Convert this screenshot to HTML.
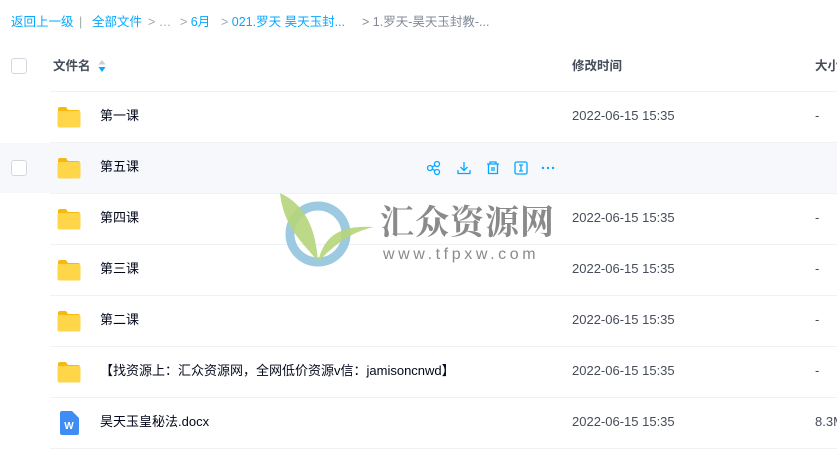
<!DOCTYPE html><html><head><meta charset="utf-8"><style>
body{margin:0;width:837px;height:468px;background:#fff;font-family:"Liberation Sans","Noto Sans CJK SC",sans-serif;position:relative;overflow:hidden}
.a{position:absolute;white-space:nowrap;line-height:16px}
.bc{top:14px;font-size:12.5px;color:#06a7ff}
.g{color:#a0a6b0}
.line{position:absolute;left:50px;right:0;height:1px;background:#f0f1f4}
.cb{position:absolute;left:11px;width:14px;height:14px;border:1px solid #d4d7de;border-radius:3px;background:#fff}
.fold{position:absolute;left:57px;width:24px;height:22px}
.nm,.dt,.sz{position:absolute;font-size:13px;line-height:16px;white-space:nowrap}
.nm{left:100px;color:#03081a}
.dt{left:572px;color:#454d5a}
.sz{left:815px;color:#454d5a}
</style></head><body>
<div class="a bc" style="left:11px">返回上一级</div>
<div class="a bc g" style="left:79px">|</div>
<div class="a bc" style="left:92px">全部文件</div>
<div class="a bc g" style="left:148px">&gt; …</div>
<div class="a bc" style="left:180px"><span class="g">&gt;</span> 6月</div>
<div class="a bc" style="left:221px"><span class="g">&gt;</span> 021.罗天 昊天玉封...</div>
<div class="a bc" style="left:362px;color:#818999">&gt; 1.罗天-昊天玉封教-...</div>

<div class="cb" style="top:58px"></div>
<div class="a" style="left:53px;top:58px;font-size:12.5px;color:#454d5a;font-weight:bold">文件名</div>
<svg class="a" style="left:98px;top:60px" width="8" height="12"><path d="M4 0L7.5 4.5H0.5Z" fill="#c8ccd4"/><path d="M4 12L7.5 7H0.5Z" fill="#06a7ff"/></svg>
<div class="a" style="left:572px;top:58px;font-size:12.5px;color:#454d5a;font-weight:bold">修改时间</div>
<div class="a" style="left:815px;top:58px;font-size:12.5px;color:#454d5a;font-weight:bold">大小</div>

<div class="a" style="left:0;top:143px;width:837px;height:50px;background:#f6f8fc"></div>
<div class="cb" style="top:160px"></div>

<div class="line" style="top:91px"></div><div class="line" style="top:142px"></div><div class="line" style="top:193px"></div><div class="line" style="top:244px"></div><div class="line" style="top:295px"></div><div class="line" style="top:346px"></div><div class="line" style="top:397px"></div><div class="line" style="top:448px"></div>

<svg width="0" height="0" style="position:absolute"><defs><symbol id="f" viewBox="0 0 24 22"><path d="M1 3a2 2 0 0 1 2-2h6l2 3h10a2 2 0 0 1 2 2v1H1z" fill="#f5b90f"/><rect x="0.5" y="5" width="23" height="16.5" rx="2" fill="#ffd54a"/></symbol></defs></svg>

<svg class="fold" style="top:106px"><use href="#f"/></svg><div class="nm" style="top:108px">第一课</div><div class="dt" style="top:108px">2022-06-15 15:35</div><div class="sz" style="top:108px">-</div>
<svg class="fold" style="top:157px"><use href="#f"/></svg><div class="nm" style="top:159px">第五课</div>
<svg class="fold" style="top:208px"><use href="#f"/></svg><div class="nm" style="top:210px">第四课</div><div class="dt" style="top:210px">2022-06-15 15:35</div><div class="sz" style="top:210px">-</div>
<svg class="fold" style="top:259px"><use href="#f"/></svg><div class="nm" style="top:261px">第三课</div><div class="dt" style="top:261px">2022-06-15 15:35</div><div class="sz" style="top:261px">-</div>
<svg class="fold" style="top:310px"><use href="#f"/></svg><div class="nm" style="top:312px">第二课</div><div class="dt" style="top:312px">2022-06-15 15:35</div><div class="sz" style="top:312px">-</div>
<svg class="fold" style="top:361px"><use href="#f"/></svg><div class="nm" style="top:363px">【找资源上：汇众资源网，全网低价资源v信：jamisoncnwd】</div><div class="dt" style="top:363px">2022-06-15 15:35</div><div class="sz" style="top:363px">-</div>
<svg class="a" style="left:59px;top:411px" width="20" height="24"><path d="M3 0h10l7 7v15a2 2 0 0 1-2 2H3a2 2 0 0 1-2-2V2a2 2 0 0 1 2-2z" fill="#3f8cf4"/><text x="10" y="18" font-size="10" font-weight="bold" fill="#fff" text-anchor="middle" font-family="Liberation Sans">W</text></svg>
<div class="nm" style="top:414px">昊天玉皇秘法.docx</div><div class="dt" style="top:414px">2022-06-15 15:35</div><div class="sz" style="top:414px">8.3M</div>

<svg class="a" style="left:426px;top:159px" width="136" height="18" fill="none" stroke="#06a7ff" stroke-width="1.3">
<circle cx="4" cy="9" r="2.5"/><circle cx="11" cy="5" r="2.5"/><circle cx="11" cy="13" r="2.5"/><path d="M6.3 8l2.5-1.6M6.3 10l2.5 1.6"/>
<path d="M38 3v8M34.5 8l3.5 3.5 3.5-3.5M32 11v3.5h12V11"/>
<path d="M61 5h12M64 5V3h6v2M62.5 5v9.5h9V5M66 8v4M68 8v4"/>
<rect x="89" y="3" width="12" height="12" rx="1.5"/><path d="M93 6h4M95 6v6M93 12h4"/>
<g fill="#06a7ff" stroke="none"><circle cx="117" cy="9" r="1.2"/><circle cx="122" cy="9" r="1.2"/><circle cx="127" cy="9" r="1.2"/></g>
</svg>

<svg class="a" style="left:276px;top:190px" width="290" height="90">
<circle cx="42" cy="44" r="28" fill="none" stroke="#8cc0dc" stroke-width="9" opacity="0.85"/>
<path d="M4 3C30 15 40 40 42 72C30 55 8 40 4 3Z" fill="#b5d57a" opacity="0.9"/>
<path d="M42 72C48 45 65 35 98 37C75 42 58 55 42 72Z" fill="#b5d57a" opacity="0.9"/>
<text x="104" y="44" font-size="34" font-weight="bold" fill="#8a8a8a" font-family="'Noto Serif CJK SC',serif" letter-spacing="1">汇众资源网</text>
<text x="107" y="69" font-size="16" fill="#8a8a8a" font-family="Liberation Sans" letter-spacing="3.6">www.tfpxw.com</text>
</svg>
</body></html>
